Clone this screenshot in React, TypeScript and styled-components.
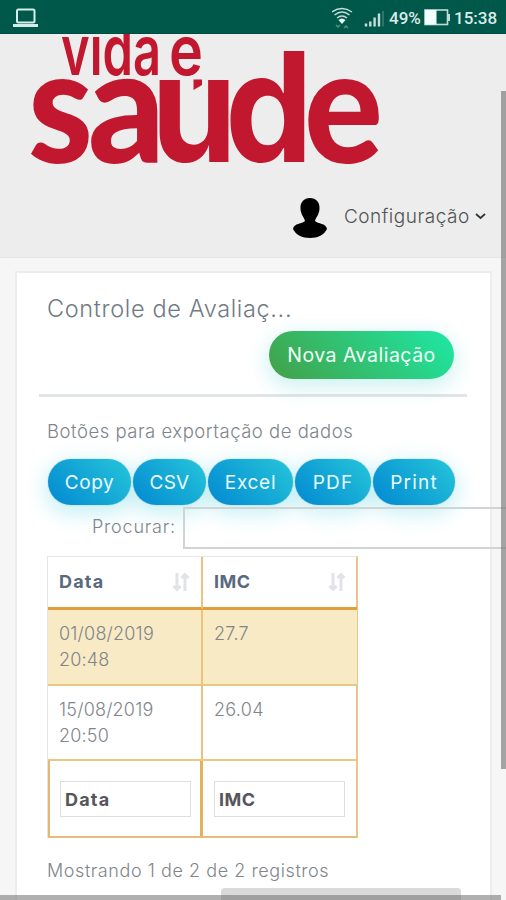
import React from "react";
import styled, { createGlobalStyle } from "styled-components";

const Global = createGlobalStyle`
  * { box-sizing: border-box; }
  html, body { margin: 0; padding: 0; overflow: hidden; background: #f6f6f7; }
  body { font-family: Inter, "Open Sans", sans-serif; font-weight: 300; color: #80858b; }
`;

const Screen = styled.div`
  position: relative;
  width: 506px;
  height: 900px;
  overflow: hidden;
  display: flex;
  flex-direction: column;
`;

const StatusBar = styled.div`
  flex: none;
  height: 34px;
  display: flex;
  align-items: center;
  justify-content: space-between;
  padding: 2px 11px 0 13px;
  background: #00584b;
  border-bottom: 1px solid #004c40;
`;

const StatusGroup = styled.div`
  display: flex;
  align-items: center;
`;

const StatusText = styled.span<{ $width: number }>`
  width: ${(p) => p.$width}px;
  margin-left: ${(p) => (p.$width > 40 ? 4 : 5)}px;
  white-space: nowrap;
  font: 500 17px/20px Roboto, sans-serif;
  color: #dcebe8;
`;

const Header = styled.header`
  flex: none;
  height: 224px;
  display: flex;
  flex-direction: column;
  background: #ededed;
  border-bottom: 1px solid #e7e7e8;
`;

const Logo = styled.svg`
  flex: none;
  display: block;
  width: 506px;
  height: 140px;
  fill: #c2182f;
  font-family: Inter, sans-serif;
`;

const UserMenu = styled.div`
  display: flex;
  align-items: center;
  height: 88px;
  padding: 5px 0 0 293px;
`;

const Label = styled.span<{ $size: number; $spacing: number }>`
  font-size: ${(p) => p.$size}px;
  letter-spacing: ${(p) => p.$spacing}px;
  white-space: nowrap;
`;

const UserLabel = styled(Label)`
  margin: -4px 5px 0 17px;
  color: #505355;
`;

const Caret = styled.svg`
  margin-top: -2px;
`;

const Card = styled.main`
  flex: none;
  width: 477px;
  height: 640px;
  margin: 13px 0 0 15px;
  padding: 0 24px 0 30px;
  border: 2px solid #ededee;
  background: #fff;
`;

const Title = styled.h2`
  margin: 0;
  padding-top: 20px;
  height: 58px;
  font-weight: 300;
  line-height: 32px;
  color: #717a84;
`;

const Actions = styled.div`
  display: flex;
  justify-content: flex-end;
  height: 66px;
  margin: 0 -1px 0 -8px;
  padding-right: 13px;
  border-bottom: 3px solid #e2e5e6;
`;

const PrimaryButton = styled.button`
  width: 185px;
  height: 48px;
  padding: 0;
  border: 0;
  border-radius: 24px;
  font-family: inherit;
  font-weight: 400;
  color: #f1fff8;
  background: linear-gradient(45deg, #43a047, #1de9a6);
  box-shadow: 0 6px 20px 2px rgba(29, 190, 190, 0.22);
`;

const ExportLabel = styled.div`
  height: 62px;
  padding-top: 21px;
  line-height: 26px;
`;

const ExportRow = styled.div`
  display: flex;
  gap: 2px;
  height: 48px;
  margin-left: 1px;
`;

const ExportButton = styled.button<{ $width: number }>`
  flex: none;
  width: ${(p) => p.$width}px;
  height: 46px;
  padding: 0;
  border: 0;
  border-radius: 23px;
  font-family: inherit;
  font-weight: 400;
  color: #eafaff;
  background: linear-gradient(45deg, #0288d1, #26c6da);
  box-shadow: 0 6px 20px 3px rgba(38, 198, 218, 0.26), 0 0 1px #478d9c;
`;

const SearchRow = styled.label`
  position: relative;
  display: flex;
  align-items: center;
  width: 500px;
  height: 42px;
  padding-left: 45px;
`;

const SearchLabel = styled(Label)`
  width: 84px;
  margin-top: -3px;
`;

const SearchInput = styled.input`
  width: 400px;
  height: 42px;
  margin-left: 7px;
  border: 2px solid #d1d4d5;
  background: transparent;
`;

const Table = styled.div`
  display: grid;
  grid-template-columns: 155px 154px;
  grid-template-rows: 53px 76px 75px 77px;
  width: 311px;
  margin-top: 7px;
  border: 1px solid #e5e5e7;
  border-bottom: 0;
  border-right: 2px solid #e7c68e;
`;

const Cell = styled.div<{ $first?: boolean; $odd?: boolean }>`
  padding: 11px 11px;
  line-height: 26px;
  border-right: ${(p) => (p.$first ? "2px solid #edc27b" : "0")};
  border-bottom: 2px solid #ecc683;
  background: ${(p) => (p.$odd ? "#f7eac4" : "transparent")};
`;

const HeadCell = styled(Cell)`
  display: flex;
  align-items: center;
  justify-content: space-between;
  padding: 0 11px;
  font-weight: 700;
  color: #596a80;
  border-bottom: 3px solid #e09e3c;
`;

const FootCell = styled.div<{ $first?: boolean }>`
  padding: 20px 11px 0 ${(p) => (p.$first ? 10 : 11)}px;
  border-left: ${(p) => (p.$first ? "2px solid #e6b76e" : "0")};
  border-right: ${(p) => (p.$first ? "3px solid #e6b259" : "0")};
  border-bottom: 2px solid #e3bd7b;
`;

const FilterBox = styled.div`
  display: flex;
  align-items: center;
  width: 131px;
  height: 36px;
  padding-left: 4px;
  border: 1px solid #dedede;
  font-weight: 700;
  color: #55565a;
`;

const Info = styled.div`
  padding-top: 20px;
  line-height: 26px;
`;

const VerticalThumb = styled.div`
  position: absolute;
  right: 0;
  top: 91px;
  width: 5px;
  height: 678px;
  background: rgba(105, 105, 105, 0.58);
`;

const InnerThumb = styled.div`
  position: absolute;
  left: 221px;
  bottom: 0;
  width: 240px;
  height: 12px;
  border-radius: 4px 4px 0 0;
  background: #dadada;
`;

const BottomTrack = styled.div`
  position: absolute;
  left: 0;
  bottom: 0;
  width: 501px;
  height: 5px;
  background: rgba(105, 105, 105, 0.53);
`;

const SortIcon = () => (
  <svg width="18" height="20" viewBox="0 0 18 20" fill="none" stroke="#e1e3e6" strokeWidth="3">
    <path d="M5 1V17M13 19V3M1.500 14 5 17.500 8.500 14M9.500 6 13 2.500 16.500 6" />
  </svg>
);

const exportsList = [
  { text: "Copy", width: 83, spacing: 0.6 },
  { text: "CSV", width: 73, spacing: 0.3 },
  { text: "Excel", width: 85, spacing: 0.7 },
  { text: "PDF", width: 76, spacing: 1.2 },
  { text: "Print", width: 82, spacing: 1.2 },
];

const rows = [
  { date: "01/08/2019", time: "20:48", imc: "27.7" },
  { date: "15/08/2019", time: "20:50", imc: "26.04" },
];

export default function App() {
  return (
    <Screen>
      <Global />
      <StatusBar>
        <svg width="25" height="20" viewBox="0 0 25 20" fill="none" stroke="#d5eee9">
          <rect x="4" y="1.5" width="17.5" height="13" rx="1.5" strokeWidth="2" />
          <path d="M0 17.500H25" strokeWidth="3" />
        </svg>
        <StatusGroup>
          <svg width="52" height="24" viewBox="0 0 52 24" fill="none" stroke="#c6ddd9" strokeWidth="1.5">
            <path d="M0 6Q10 -1 20 6M2.500 9Q10 3 17.500 9M5 12Q10 8 15 12" />
            <path d="M6.500 14Q10 11 13.500 14L10 18Z" fill="#e4f5f2" stroke="none" />
            <path d="M4 19 6 21 8 19M12 22 14 20 16 22" stroke="#4f9186" />
            <path d="M34 20.500V17.500M38.300 20.500V15.500M42.600 20.500V11.500M47 20.500V7.500" strokeWidth="2.4" />
            <path d="M51 20.500V5" stroke="#488b80" strokeWidth="1.2" />
          </svg>
          <StatusText $width={35}>49%</StatusText>
          <svg width="26" height="17" viewBox="0 0 26 17">
            <rect x="1" y="1" width="22.5" height="14.5" fill="none" stroke="#c1dad5" strokeWidth="1.6" />
            <rect x="1" y="1" width="11.5" height="14.5" fill="#f1fffc" />
            <path d="M25 5V12" stroke="#c1dad5" strokeWidth="2" />
          </svg>
          <StatusText $width={41}>15:38</StatusText>
        </StatusGroup>
      </StatusBar>
      <Header>
        <Logo viewBox="0 34 506 140" aria-label="vida e saúde">
          <defs>
            <clipPath id="bowl"><rect x="150" y="79" width="90" height="90" /></clipPath>
          </defs>
          <g fontWeight="600" fontSize="69">
            <text x="61" y="75" textLength="100" lengthAdjust="spacingAndGlyphs">vida</text>
            <text x="169" y="75" textLength="34" lengthAdjust="spacingAndGlyphs">e</text>
          </g>
          <g fontFamily="Lato" fontWeight="900" fontSize="160">
            <text x="28" y="162.500" textLength="65" lengthAdjust="spacingAndGlyphs">s</text>
            <text x="88" y="162.500" textLength="77" lengthAdjust="spacingAndGlyphs">a</text>
            <g clipPath="url(#bowl)" fontFamily="Inter" fontSize="150" fontWeight="700">
              <text x="151" y="162" textLength="86" lengthAdjust="spacingAndGlyphs">ú</text>
            </g>
            <text x="225" y="162" textLength="88" lengthAdjust="spacingAndGlyphs" fontFamily="Inter" fontSize="152" fontWeight="700">d</text>
            <text x="304" y="162.500" textLength="79" lengthAdjust="spacingAndGlyphs">e</text>
          </g>
          <path d="M193.500 79.500H202V85L193.500 90Z" />
        </Logo>
        <UserMenu>
          <svg width="34" height="42" viewBox="0 0 34 42" fill="#000">
            <path d="M17 1C23 1 27 5 26.500 12C26 18 23 20 22 24C25 27 33 26 34 32C31 38 25 41 17 41S3 38 0 32C1 26 9 27 12 24C11 20 8 18 7.500 12C7 5 11 1 17 1Z" />
          </svg>
          <UserLabel $size={19} $spacing={0.5}>Configuração</UserLabel>
          <Caret width="11" height="8" viewBox="0 0 11 8" fill="none" stroke="#333" strokeWidth="1.7">
            <path d="M1 1 5.500 5 10 1" />
          </Caret>
        </UserMenu>
      </Header>
      <Card>
        <Title><Label $size={23.5} $spacing={0.65}>Controle de Avaliaç...</Label></Title>
        <Actions>
          <PrimaryButton><Label $size={19.5} $spacing={0.5}>Nova Avaliação</Label></PrimaryButton>
        </Actions>
        <ExportLabel><Label $size={18.5} $spacing={0.52}>Botões para exportação de dados</Label></ExportLabel>
        <ExportRow>
          {exportsList.map((b) => (
            <ExportButton key={b.text} $width={b.width}>
              <Label $size={19} $spacing={b.spacing}>{b.text}</Label>
            </ExportButton>
          ))}
        </ExportRow>
        <SearchRow>
          <SearchLabel $size={18} $spacing={0.8}>Procurar:</SearchLabel>
          <SearchInput aria-label="Procurar" />
        </SearchRow>
        <Table>
          <HeadCell $first><Label $size={18} $spacing={1.2}>Data</Label><SortIcon /></HeadCell>
          <HeadCell><Label $size={18} $spacing={0.5}>IMC</Label><SortIcon /></HeadCell>
          {rows.map((r, i) => (
            <React.Fragment key={r.date}>
              <Cell $first $odd={i === 0}>
                <Label $size={18} $spacing={0.2}>{r.date}</Label><br />
                <Label $size={18} $spacing={0.2}>{r.time}</Label>
              </Cell>
              <Cell $odd={i === 0}><Label $size={18} $spacing={0.3}>{r.imc}</Label></Cell>
            </React.Fragment>
          ))}
          <FootCell $first><FilterBox><Label $size={18} $spacing={1.2}>Data</Label></FilterBox></FootCell>
          <FootCell><FilterBox><Label $size={18} $spacing={0.5}>IMC</Label></FilterBox></FootCell>
        </Table>
        <Info><Label $size={18} $spacing={0.57}>Mostrando 1 de 2 de 2 registros</Label></Info>
      </Card>
      <InnerThumb />
      <BottomTrack />
      <VerticalThumb />
    </Screen>
  );
}
